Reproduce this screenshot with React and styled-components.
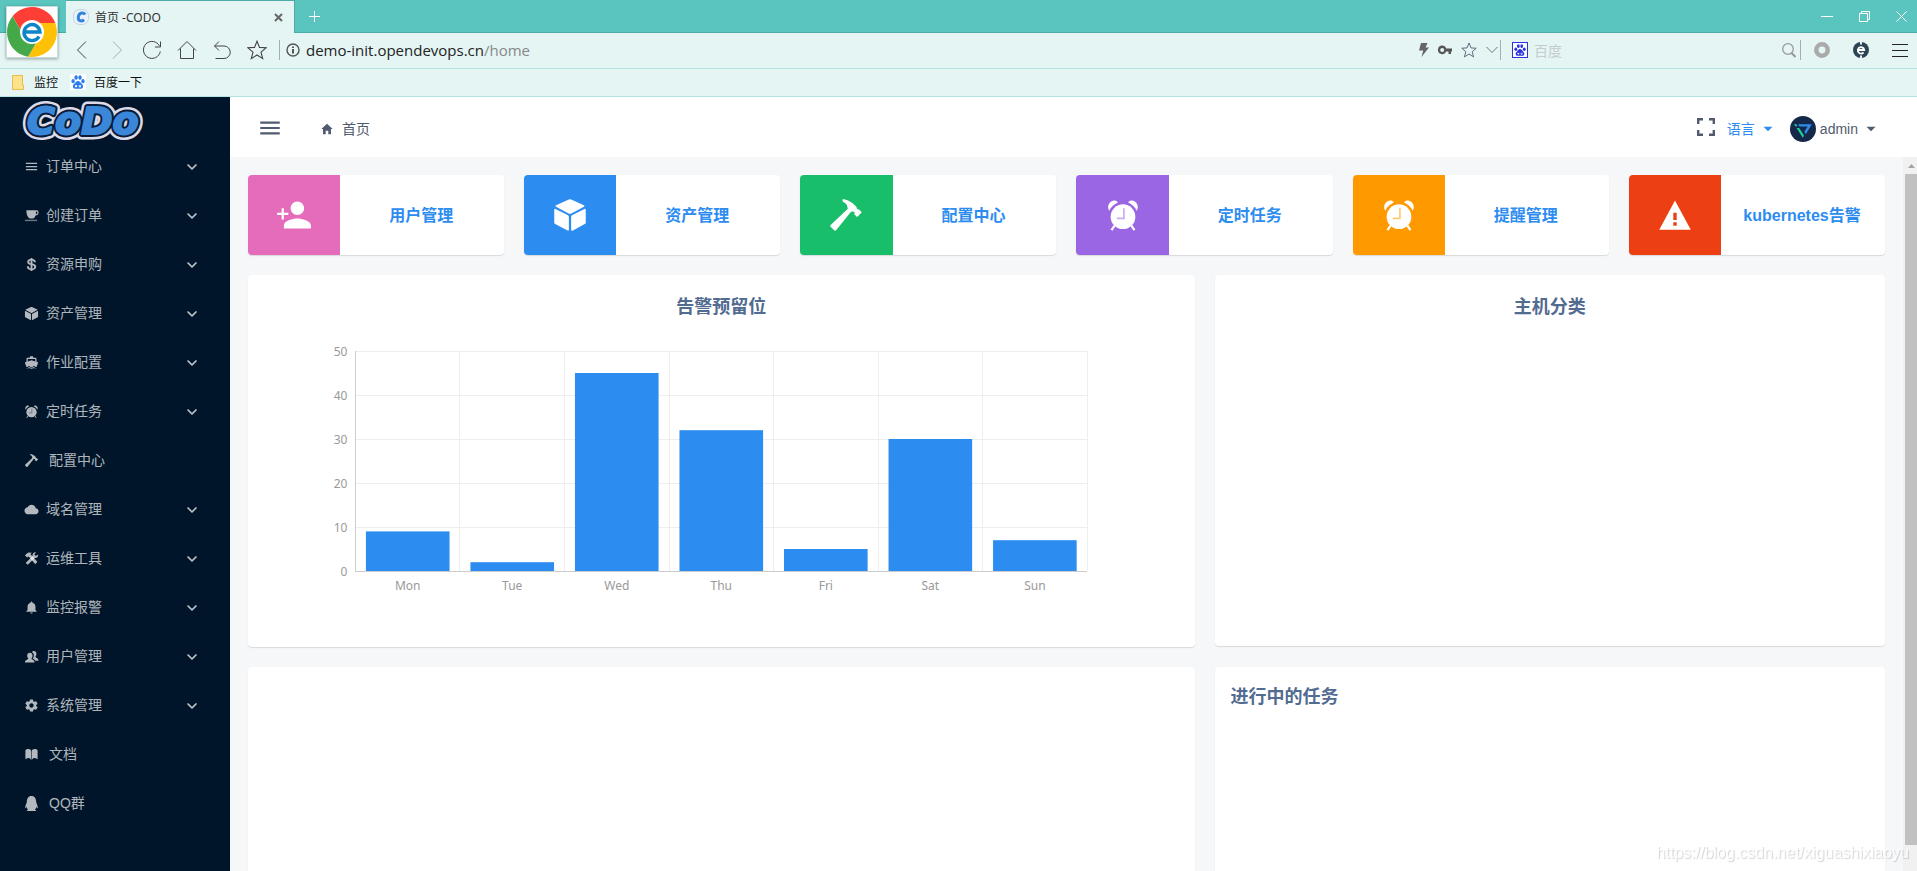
import React from "react";
import styled, { createGlobalStyle } from "styled-components";
import {
  IoMdMenu, IoLogoUsd, IoMdCube, IoMdBoat, IoMdHammer, IoMdCloud,
  IoMdNotifications, IoMdSettings, IoIosBook, IoMdHome, IoMdExpand,
  IoMdPersonAdd, IoIosArrowDown, IoMdArrowDropdown,
} from "react-icons/io";
import { FaQq } from "react-icons/fa";

const Global = createGlobalStyle`
  *, *::before, *::after { box-sizing: border-box; }
  body {
    margin: 0;
    font-family: "Liberation Sans", "Noto Sans CJK SC", sans-serif;
    font-size: 14px;
    color: #515a6e;
    overflow: hidden;
  }
  button {
    font: inherit;
    color: inherit;
    background: none;
    border: 0;
    padding: 0;
    cursor: pointer;
  }
  a { color: inherit; text-decoration: none; }
  svg { display: block; flex: none; }
  h1, h2, p, ul { margin: 0; padding: 0; list-style: none; }
`;

/* ---------- browser frame ---------- */

const Window = styled.div`
  display: flex;
  flex-direction: column;
  height: 100vh;
`;

const BrowserFrame = styled.header`
  position: relative;
  flex: none;
  font-family: "Noto Sans", "Noto Sans CJK SC", sans-serif;
  background: #e4f5f4;
`;

const BrowserLogo = styled.button`
  position: absolute;
  top: 6px;
  left: 6px;
  background: #fff;
  border: 1px solid #c5dedc;
  box-shadow: 0 1px 3px rgba(0, 0, 0, 0.35);
`;

const TabStrip = styled.div`
  display: flex;
  height: 33px;
  padding-left: 66px;
  background: #5ac4be;
  box-shadow: inset 0 -1px #4eaaa5;
`;

const Tab = styled.div`
  display: flex;
  align-items: center;
  gap: 6px;
  width: 229px;
  padding: 0 10px 0 7px;
  font-size: 12px;
  color: #333;
  background: #e4f5f4;
  border: solid #4eaaa5;
  border-width: 1px 1px 0 0;
`;

const TabTitle = styled.span`
  flex: 1;
`;

const PlusButton = styled.button`
  display: flex;
  align-items: center;
  justify-content: center;
  width: 38px;
`;

const WindowButtons = styled.div`
  display: flex;
  align-items: center;
  gap: 26px;
  margin-left: auto;
  padding: 0 10px 1px 0;
`;

const NavBar = styled.div`
  display: flex;
  align-items: center;
  height: 36px;
  padding: 0 9px 1px 64px;
  border-bottom: 1px solid #b4e5e2;
`;

const NavButton = styled.button`
  display: flex;
  align-items: center;
  justify-content: center;
  width: 35px;
  height: 35px;
  color: ${(p) => (p.$dim ? "#a5adac" : "#444")};
`;

const AddressBar = styled.label`
  display: flex;
  flex: 1;
  align-items: center;
  height: 20px;
  margin-left: 5px;
  padding-left: 6px;
  font-family: "Open Sans", sans-serif;
  font-size: 15px;
  color: #888;
  border-left: 1px solid #a5b1b0;
`;

const AddressInput = styled.input`
  field-sizing: content;
  margin-left: 6px;
  padding: 0;
  font: inherit;
  color: #222;
  background: none;
  border: 0;
  outline: 0;
`;

const ToolGroup = styled.div`
  display: flex;
  align-items: center;
  gap: ${(p) => p.$gap}px;
  padding: ${(p) => p.$pad};
`;

const SearchBox = styled.label`
  display: flex;
  align-items: center;
  gap: 6px;
  width: 301px;
  height: 20px;
  padding: 0 4px 0 11px;
  border: solid #a5b1b0;
  border-width: 0 1px;
`;

const SearchInput = styled.input`
  flex: 1;
  min-width: 0;
  padding: 0;
  font: inherit;
  background: none;
  border: 0;
  outline: 0;
  &::placeholder { color: #c6cccb; }
`;

const BaiduBadge = styled.span`
  display: flex;
  align-items: center;
  justify-content: center;
  width: 16px;
  height: 16px;
  color: ${(p) => p.$color};
  background: #fff;
  border: ${(p) => (p.$framed ? `1px solid ${p.$color}` : "0")};
`;

const BookmarkBar = styled.nav`
  display: flex;
  align-items: center;
  gap: 12px;
  height: 28px;
  padding: 0 0 1px 12px;
  font-size: 12px;
  color: #111;
  border-bottom: 1px solid #b4e5e2;
`;

const Bookmark = styled.a`
  display: flex;
  align-items: center;
  gap: ${(p) => p.$gap}px;
`;

/* ---------- application ---------- */

const Shell = styled.div`
  display: flex;
  flex: 1;
  min-height: 0;
`;

const Sidebar = styled.aside`
  flex: none;
  width: 230px;
  background: #001529;
  color: rgba(255, 255, 255, 0.7);
  overflow: hidden;
`;

const Brand = styled.div`
  height: 45px;
  padding: 5px 21px;
`;

const MenuItem = styled.a`
  display: flex;
  align-items: center;
  gap: ${(p) => (p.$leaf ? 10 : 7)}px;
  width: 100%;
  height: 49px;
  padding: 0 31px 0 24px;
  text-align: left;
`;

const MenuLabel = styled.span`
  flex: 1;
  padding-bottom: 3px;
`;

const Workspace = styled.div`
  display: flex;
  flex: 1;
  flex-direction: column;
  min-width: 0;
`;

const TopBar = styled.div`
  display: flex;
  flex: none;
  align-items: center;
  height: 60px;
  padding: 4px 37px 0 27px;
  background: #fff;
`;

const MenuToggle = styled.button`
  margin: 0 37px 3px 0;
`;

const Breadcrumb = styled.a`
  display: flex;
  flex: 1;
  align-items: center;
  gap: 8px;
`;

const TopLabel = styled.span`
  padding-bottom: 2px;
`;

const TopAction = styled.button`
  display: flex;
  align-items: center;
  gap: ${(p) => p.$gap || 0}px;
  margin-left: ${(p) => p.$space || 0}px;
  padding-bottom: ${(p) => p.$lift || 0}px;
  color: ${(p) => (p.$active ? "#2d8cf0" : "#515a6e")};
`;

const ScrollPane = styled.div`
  display: flex;
  flex: 1;
  min-height: 0;
`;

const Content = styled.main`
  flex: 1;
  min-width: 0;
  padding: 18px;
  background: #f5f7f9;
  overflow: hidden;
`;

const Scrollbar = styled.div`
  display: flex;
  flex: none;
  flex-direction: column;
  align-items: center;
  width: 14px;
  padding: 7px 0 26px 2px;
  background: #f1f1f1;
`;

const ScrollThumb = styled.div`
  flex: 1;
  width: 100%;
  margin-top: 6px;
  background: #c1c1c1;
`;

const CardGrid = styled.div`
  display: grid;
  grid-template-columns: repeat(6, 1fr);
  gap: 20px;
`;

const surface = `
  background: #fff;
  border-radius: 4px;
  box-shadow: 0 1px 1px rgba(0, 0, 0, 0.12);
`;

const InfoCard = styled.a`
  ${surface}
  display: flex;
  height: 80px;
  overflow: hidden;
`;

const InfoIcon = styled.span`
  display: flex;
  align-items: center;
  justify-content: center;
  width: 36%;
  color: #fff;
  background: ${(p) => p.$color};
`;

const InfoTitle = styled.span`
  display: flex;
  flex: 1;
  align-items: center;
  justify-content: center;
  padding: 0 2px 2px 0;
  font-size: 16px;
  font-weight: 600;
  color: #2d8cf0;
`;

const PanelRow = styled.div`
  display: flex;
  margin: 20px -10px 0;
`;

const PanelColumn = styled.div`
  width: calc(100% * ${(p) => p.$span} / 24);
  padding: 0 10px;
`;

const Panel = styled.section`
  ${surface}
  height: ${(p) => p.$height}px;
  padding: 16px;
`;

const PanelTitle = styled.h2`
  font-size: 18px;
  line-height: ${(p) => (p.$left ? 28 : 32)}px;
  font-weight: 700;
  color: #516b91;
  text-align: ${(p) => (p.$left ? "left" : "center")};
`;

const Chart = styled.svg`
  width: 100%;
  height: 308px;
  overflow: visible;
  font-family: "Noto Sans", sans-serif;
  font-size: 12px;
  fill: #999;
`;

const Watermark = styled.p`
  position: fixed;
  right: 8px;
  bottom: 6px;
  font-size: 16px;
  line-height: 24px;
  color: rgba(255, 255, 255, 0.85);
  text-shadow: 1px 1px 1px rgba(0, 0, 0, 0.18);
`;

/* ---------- drawings ---------- */

const Line = ({ w = 20, h = 20, sw = 1, children }) => (
  <svg width={w} height={h} viewBox={`0 0 ${w} ${h}`} fill="none" stroke="currentColor" strokeWidth={sw}>
    {children}
  </svg>
);

const BrowserMark = () => (
  <svg width="50" height="50" viewBox="-25 -25 50 50">
    <path fill="#ff3e35" d="M-19.4-15.7A25 25 0 0 1 23.3-9H0L-7.8 4.5Z" />
    <path fill="#ffc107" d="M23.3-9A25 25 0 0 1-3.9 24.7L7.8 4.5 0-9Z" />
    <path fill="#45a949" d="M-3.9 24.7A25 25 0 0 1-19.4-15.7L-7.8 4.5H7.8Z" />
    <circle r="12" fill="#fff" />
    <path d="M-8.5 0H8A8 8 0 1 0 7 4.500" fill="none" stroke="#0d86c8" strokeWidth="3.4" />
  </svg>
);

const BrandMark = () => (
  <svg width="124" height="37" overflow="visible" fontFamily="DejaVu Sans" fontWeight="700" fontStyle="italic" fontSize="38" strokeLinejoin="round">
    <text x="6" y="32" fill="#dddbe8" stroke="#dddbe8" strokeWidth="11">CoDo</text>
    <text x="6" y="32" fill="#0a1c38" stroke="#0a1c38" strokeWidth="6">CoDo</text>
    <text x="6" y="32" fill="#3a87d9" stroke="#3a87d9" strokeWidth="2">CoDo</text>
  </svg>
);

const TabIcon = () => (
  <svg width="16" height="16" viewBox="0 0 16 16">
    <rect x="0.5" y="0.5" width="15" height="15" rx="6" fill="#e9f1fb" stroke="#c5d3e4" />
    <path d="M12 5.6C11 3 6.400 3.400 5.400 7.500 4.500 12 8.500 13.200 11 10.600" fill="none" stroke="#3385db" strokeWidth="3" />
  </svg>
);

const Paw = ({ size }) => (
  <svg width={size} height={size} viewBox="0 0 16 16" fill="currentColor">
    <ellipse cx="2.400" cy="7" rx="1.900" ry="2.400" />
    <ellipse cx="5.800" cy="2.800" rx="1.900" ry="2.600" />
    <ellipse cx="10.300" cy="2.800" rx="1.900" ry="2.600" />
    <ellipse cx="13.700" cy="7" rx="1.900" ry="2.400" />
    <path fillRule="evenodd" d="M8 6.800c1.800 0 2.600 1.500 3.700 2.700 1.200 1.200 2.300 2.100 2.100 3.900-.2 1.700-1.500 2.400-3 2.400H5.200c-1.500 0-2.800-.7-3-2.400-.2-1.800.9-2.700 2.100-3.900C5.400 8.300 6.200 6.800 8 6.800ZM5.800 11.500a1.300 1.300 0 1 0 .01 2.600 1.300 1.300 0 0 0 0-2.600ZM9 11.500v2.600h2.300v-2.600h-.9v1.700h-.5v-1.700Z" />
  </svg>
);

const Star = ({ size }) => (
  <svg width={size} height={size} viewBox="0 0 20 20" fill="none" stroke="currentColor" strokeWidth="1.1">
    <path d="M10 1.200l2.500 6.200 6.500.4-5 4.300 1.700 6.500L10 15l-5.700 3.600L6 12.100 1 7.800l6.500-.4z" />
  </svg>
);

const Avatar = () => (
  <svg width="26" height="26" viewBox="0 0 26 26">
    <circle cx="13" cy="13" r="13" fill="#15284a" />
    <path d="M8 8.300H21.800L15.800 18.200 14.300 15.800 17.700 10.600H9.500Z" fill="#2d8cf0" />
    <path d="M4 8.300H6.400L7.600 10.300H5.200ZM6.600 12H9.200L14 19.500 12.800 21.800Z" fill="#19d197" />
  </svg>
);

const Glyph = ({ size, children }) => (
  <svg width={size} height={size} viewBox="0 0 32 32" fill="currentColor">{children}</svg>
);

const AlarmIcon = ({ size }) => (
  <Glyph size={size}>
    <mask id="clock-hands" maskUnits="userSpaceOnUse" x="0" y="0" width="32" height="32">
      <rect width="32" height="32" fill="#fff" />
      <path d="M16.800 10v9H10.500" fill="none" stroke="#777" strokeWidth="1.500" />
    </mask>
    <g mask="url(#clock-hands)">
      <circle cx="16" cy="17.500" r="11" />
    </g>
    <path d="M3.800 12.300C1 8 4.500 2.800 8.800 3.200c1.400.1 2.300.9 2.600 1.700C8.300 6.200 5.300 8.900 3.800 12.300ZM28.200 12.300C31 8 27.500 2.800 23.200 3.200c-1.400.1-2.300.9-2.600 1.700 3.100 1.300 6.100 4 7.600 7.400Z" />
    <path d="M8.500 25.500L5.800 29.500M23.500 25.500l2.700 4" stroke="currentColor" strokeWidth="2" />
  </Glyph>
);

const HammerIcon = ({ size }) => (
  <svg width={size} height={size} viewBox="0 0 32 32">
    <g transform="translate(32 0) scale(-1 1)"><IoMdHammer size={32} /></g>
  </svg>
);

const WarningIcon = ({ size }) => (
  <Glyph size={size}>
    <path fillRule="evenodd" d="M16 3l14 26H2ZM14.500 14v6.500h3V14ZM14.500 22.500v3h3v-3Z" />
  </Glyph>
);

const CafeIcon = ({ size }) => (
  <Glyph size={size}>
    <path fillRule="evenodd" d="M5 5H27c3 0 4 2 4 4.500 0 4-2.500 6-6.500 6.500-.8 3-2.500 5.500-5 6.500h-7C8 20.500 5 15 5 5ZM25.500 7.500v6c2-.5 3-1.800 3-3.800 0-1.400-.8-2.200-3-2.200Z" />
    <path d="M2 25h26v3H2z" opacity=".6" />
  </Glyph>
);

const ToolsIcon = ({ size }) => (
  <Glyph size={size}>
    <path d="M2 9l7-6 8 .5-3.500 3 15 16.500-4.500 5L10 11.500 6.500 14Z" />
    <path d="M25.500 3l-3.500 4 3 3.500L30 7.500c1 5-3 8.500-7 7.500L8 29.500 3.500 25.500 18 11c-.8-4.500 3-9 7.500-8Z" />
  </Glyph>
);

const UsersIcon = ({ size }) => (
  <Glyph size={size}>
    <path d="M21 4c3.500 0 5.500 2.500 5.500 6 0 3-1 5-2.300 6.500.3 2.500 6.800 2.300 6.800 8.500H24c-1.500-3-4-3.500-5.500-4.500 2-2.500 2.500-4.500 2.500-7 0-3-1.500-5.500-4-6.500.8-2 2-3 4-3Z" />
    <path d="M12.500 8c3.700 0 5.700 2.500 5.700 6 0 3-1 5-2.400 6.500.3 2.700 6.700 2.300 6.700 8.500H2c0-6.200 7-5.800 7.200-8.500C7.800 19 6.800 17 6.800 14c0-3.500 2-6 5.700-6Z" />
  </Glyph>
);

/* ---------- data ---------- */

const menu = [
  { icon: IoMdMenu, label: "订单中心" },
  { icon: CafeIcon, label: "创建订单" },
  { icon: IoLogoUsd, label: "资源申购" },
  { icon: IoMdCube, label: "资产管理" },
  { icon: IoMdBoat, label: "作业配置" },
  { icon: AlarmIcon, label: "定时任务" },
  { icon: HammerIcon, label: "配置中心", leaf: true },
  { icon: IoMdCloud, label: "域名管理" },
  { icon: ToolsIcon, label: "运维工具" },
  { icon: IoMdNotifications, label: "监控报警" },
  { icon: UsersIcon, label: "用户管理" },
  { icon: IoMdSettings, label: "系统管理" },
  { icon: IoIosBook, label: "文档", leaf: true },
  { icon: FaQq, label: "QQ群", leaf: true },
];

const cards = [
  { icon: IoMdPersonAdd, label: "用户管理", color: "#e46cbb" },
  { icon: IoMdCube, label: "资产管理", color: "#2d8cf0" },
  { icon: HammerIcon, label: "配置中心", color: "#19be6b" },
  { icon: AlarmIcon, label: "定时任务", color: "#9a66e4" },
  { icon: AlarmIcon, label: "提醒管理", color: "#ff9900" },
  { icon: WarningIcon, label: "kubernetes告警", color: "#ed3f14" },
];

const week = [
  ["Mon", 9], ["Tue", 2], ["Wed", 45], ["Thu", 32], ["Fri", 5], ["Sat", 30], ["Sun", 7],
];

/* ---------- parts ---------- */

const PLOT_TOP = 28;
const PLOT_HEIGHT = 220;
const valueY = (v) => PLOT_TOP + PLOT_HEIGHT - (v / 50) * PLOT_HEIGHT;
const slotX = (i) => 10 + (80 * i) / week.length;

function BarChart() {
  return (
    <Chart role="img" aria-label="告警预留位">
      <g stroke="#eee" shapeRendering="crispEdges">
        {[10, 20, 30, 40, 50].map((v) => (
          <line key={v} x1="10%" x2="90%" y1={valueY(v)} y2={valueY(v)} />
        ))}
        {week.map(([day], i) => (
          <line key={day} x1={`${slotX(i + 1)}%`} x2={`${slotX(i + 1)}%`} y1={valueY(50)} y2={valueY(0)} />
        ))}
      </g>
      {week.map(([day, v], i) => (
        <rect key={day} x={`${slotX(i + 0.1)}%`} width={`${64 / week.length}%`} y={valueY(v)} height={valueY(0) - valueY(v)} fill="#2d8cf0" />
      ))}
      <g stroke="#ccc" shapeRendering="crispEdges">
        <line x1="10%" x2="10%" y1={valueY(50)} y2={valueY(0)} />
        <line x1="10%" x2="90%" y1={valueY(0)} y2={valueY(0)} />
      </g>
      {[0, 10, 20, 30, 40, 50].map((v) => (
        <text key={v} x="10%" dx="-8" y={valueY(v) + 5} textAnchor="end">{v}</text>
      ))}
      {week.map(([day], i) => (
        <text key={day} x={`${slotX(i + 0.5)}%`} y={valueY(0) + 19} textAnchor="middle">{day}</text>
      ))}
    </Chart>
  );
}

function Browser() {
  return (
    <BrowserFrame>
      <TabStrip>
        <Tab>
          <TabIcon />
          <TabTitle>首页 -CODO</TabTitle>
          <button aria-label="关闭标签页">
            <Line w={11} h={11} sw={2}><path d="M2 2l7 7M9 2l-7 7" stroke="#666" /></Line>
          </button>
        </Tab>
        <PlusButton aria-label="新标签页">
          <Line w={11} h={11}><path d="M5.500 0v11M0 5.500h11" stroke="#fff" /></Line>
        </PlusButton>
        <WindowButtons>
          <button aria-label="最小化"><Line w={12} h={11}><path d="M0 5.500h12" stroke="#fff" /></Line></button>
          <button aria-label="还原"><Line w={11} h={11}><path d="M.5 2.500h8v8h-8zM2.500 2.500v-2h8v8h-2" stroke="#fff" /></Line></button>
          <button aria-label="关闭"><Line w={11} h={11}><path d="M.5.5l10 10M10.500.5l-10 10" stroke="#fff" /></Line></button>
        </WindowButtons>
      </TabStrip>
      <BrowserLogo aria-label="浏览器"><BrowserMark /></BrowserLogo>
      <NavBar>
        <NavButton aria-label="后退"><Line><path d="M14 1.500L5.500 10l8.500 8.500" /></Line></NavButton>
        <NavButton $dim aria-label="前进"><Line><path d="M6 1.500L14.500 10 6 18.500" /></Line></NavButton>
        <NavButton aria-label="刷新"><Line><path d="M18.300 11.500A8.500 8.500 0 1 1 17.500 6M18.500 1.500v5.500h-5.500" /></Line></NavButton>
        <NavButton aria-label="主页"><Line><path d="M1 10.500L10 1.500l9 9M3.500 8.500v10h13v-10" /></Line></NavButton>
        <NavButton aria-label="恢复"><Line><path d="M7 1.500L2.500 6 7 10.500M2.500 6H12a6 6 0 0 1 0 12.500H3.500" /></Line></NavButton>
        <NavButton aria-label="收藏"><Star size={20} /></NavButton>
        <AddressBar>
          <Line w={14} h={14} sw={1.400}><circle cx="7" cy="7" r="6" stroke="#555" /><path d="M7 6v4.500M7 3.500v1.500" stroke="#555" strokeWidth="2" /></Line>
          <AddressInput aria-label="地址" defaultValue="demo-init.opendevops.cn" />
          <span>/home</span>
        </AddressBar>
        <ToolGroup $gap={9} $pad="0 2px 0 0">
          <button aria-label="极速模式">
            <svg width="10" height="14" viewBox="0 0 10 14"><path d="M2 0H8.500L6.500 4.500H10L2.500 14 4.200 7.500H0Z" fill="#666" /></svg>
          </button>
          <button aria-label="密码">
            <svg width="14" height="10" viewBox="0 0 14 10"><path fillRule="evenodd" fill="#555" d="M4.200.5A4.300 4.300 0 0 1 8.200 3.500H14V6.500H13V9H10.500V6.500H8.200A4.300 4.300 0 1 1 4.200.5ZM4.200 3a2 2 0 1 0 .01 0Z" /></svg>
          </button>
          <button aria-label="添加收藏"><Star size={16} /></button>
          <button aria-label="展开"><Line w={12} h={8}><path d="M.5 1l5.500 5.500L11.500 1" stroke="#777" /></Line></button>
        </ToolGroup>
        <SearchBox>
          <BaiduBadge $color="#2a32e2" $framed><Paw size={12} /></BaiduBadge>
          <SearchInput aria-label="搜索" placeholder="百度" />
          <Line w={14} h={15} sw={1.300}><circle cx="6" cy="6" r="5.300" stroke="#999" /><path d="M9.500 10l4 4" stroke="#999" strokeWidth="2" /></Line>
        </SearchBox>
        <ToolGroup $gap={23} $pad="0 0 0 13px">
          <button aria-label="扩展"><Line w={16} h={16} sw={4.500}><circle cx="8" cy="8" r="5.700" stroke="#aaa" /></Line></button>
          <button aria-label="内核">
            <svg width="16" height="16" viewBox="0 0 16 16"><circle cx="8" cy="8" r="8" fill="#2b4456" /><path d="M4.800 8H11.200A3.200 3.200 0 1 0 10.500 10.400M8 0v2.500M8 16v-2.500" fill="none" stroke="#fff" strokeWidth="1.800" /></svg>
          </button>
          <button aria-label="菜单"><Line w={16} h={14}><path d="M0 1.500h16M0 7.500h16M0 13.500h16" stroke="#222" /></Line></button>
        </ToolGroup>
      </NavBar>
      <BookmarkBar>
        <Bookmark href="#jk" $gap={10}>
          <svg width="12" height="15" viewBox="0 0 12 15"><path d="M.5.5h10v9.500h1v4.500H.5z" fill="#fde28c" stroke="#e8bd4a" /></svg>
          监控
        </Bookmark>
        <Bookmark href="#baidu" $gap={8}>
          <BaiduBadge $color="#2b7bf3"><Paw size={14} /></BaiduBadge>
          百度一下
        </Bookmark>
      </BookmarkBar>
    </BrowserFrame>
  );
}

function SideMenu() {
  return (
    <Sidebar>
      <Brand role="img" aria-label="CoDo">
        <BrandMark />
      </Brand>
      <nav>
        {menu.map(({ icon: Icon, label, leaf }) => (
          <MenuItem
            key={label}
            $leaf={leaf}
            as={leaf ? "a" : "button"}
            href={leaf ? `#${label}` : undefined}
            aria-expanded={leaf ? undefined : false}
          >
            <Icon size={15} />
            <MenuLabel>{label}</MenuLabel>
            {!leaf && <IoIosArrowDown size={14} stroke="currentColor" strokeWidth="14" />}
          </MenuItem>
        ))}
      </nav>
    </Sidebar>
  );
}

export default function App() {
  return (
    <Window>
      <Global />
      <Browser />
      <Shell>
        <SideMenu />
        <Workspace>
          <TopBar>
            <MenuToggle aria-label="折叠菜单"><IoMdMenu size={26} /></MenuToggle>
            <Breadcrumb href="#home"><IoMdHome size={14} /><TopLabel>首页</TopLabel></Breadcrumb>
            <TopAction aria-label="全屏" $lift={4}><IoMdExpand size={24} /></TopAction>
            <TopAction $active $gap={4} $space={9}><TopLabel>语言</TopLabel><IoMdArrowDropdown size={18} /></TopAction>
            <TopAction $gap={4} $space={13}><Avatar />admin<IoMdArrowDropdown size={18} /></TopAction>
          </TopBar>
          <ScrollPane>
            <Content>
              <CardGrid>
                {cards.map(({ icon: Icon, label, color }) => (
                  <InfoCard key={label} href={`#${label}`}>
                    <InfoIcon $color={color}><Icon size={36} /></InfoIcon>
                    <InfoTitle>{label}</InfoTitle>
                  </InfoCard>
                ))}
              </CardGrid>
              <PanelRow>
                <PanelColumn $span={14}>
                  <Panel $height={372}>
                    <PanelTitle>告警预留位</PanelTitle>
                    <BarChart />
                  </Panel>
                </PanelColumn>
                <PanelColumn $span={10}>
                  <Panel $height={371}>
                    <PanelTitle>主机分类</PanelTitle>
                  </Panel>
                </PanelColumn>
              </PanelRow>
              <PanelRow>
                <PanelColumn $span={14}><Panel $height={372} /></PanelColumn>
                <PanelColumn $span={10}>
                  <Panel $height={372}><PanelTitle $left>进行中的任务</PanelTitle></Panel>
                </PanelColumn>
              </PanelRow>
            </Content>
            <Scrollbar aria-hidden="true">
              <svg width="7" height="4" viewBox="0 0 7 4"><path d="M0 4L3.500 0 7 4z" fill="#a3a3a3" /></svg>
              <ScrollThumb />
            </Scrollbar>
          </ScrollPane>
        </Workspace>
      </Shell>
      <Watermark>https://blog.csdn.net/xiguashixiaoyu</Watermark>
    </Window>
  );
}
